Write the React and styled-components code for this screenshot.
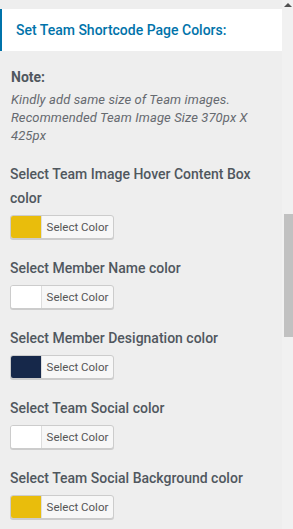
import React from 'react';
import styled, { createGlobalStyle } from 'styled-components';

const GlobalStyle = createGlobalStyle`
  html, body {
    margin: 0;
    padding: 0;
    background: #eeeeee;
  }
  body {
    font-family: Roboto, "Liberation Sans", sans-serif;
    overflow: hidden;
  }
`;

// --- Layout ---
const Frame = styled.div`
  display: flex;
  width: 293px;
  height: 529px;
`;

const Panel = styled.div`
  width: 282px;
  background: #eeeeee;
  padding-top: 9px;
  box-sizing: border-box;
`;

const Header = styled.div`
  height: 42px;
  background: #ffffff;
  border-left: 2px solid #0073aa;
  padding-left: 14px;
  display: flex;
  align-items: center;
  color: #0073aa;
  font-size: 14px;
  font-weight: 500;
`;

const Body = styled.div`
  padding: 16px 10px 0 10px;
`;

const NoteTitle = styled.div`
  font-size: 14px;
  font-weight: 700;
  line-height: 20px;
  color: #50575e;
  padding-left: 1px;
`;

const NoteText = styled.div`
  margin-top: 4px;
  font-size: 13px;
  font-style: italic;
  line-height: 18px;
  letter-spacing: 0.1px;
  color: #666a70;
  padding-left: 1px;
`;

const Field = styled.div`
  margin-top: 17px;
`;

const Label = styled.div`
  font-size: 14px;
  font-weight: 500;
  line-height: 24px;
  color: #50575e;
`;

// --- Color picker button ---
const PickerButton = styled.button`
  margin-top: 5px;
  display: flex;
  align-items: stretch;
  width: 104px;
  height: 24px;
  padding: 0;
  border: 1px solid #cccccc;
  border-radius: 3px;
  background: #f7f7f7;
  box-shadow: 0 1px 0 #cccccc;
  overflow: hidden;
  cursor: pointer;
  box-sizing: border-box;
`;

const Swatch = styled.span`
  width: 30px;
  background: ${p => p.$color};
  border-right: 1px solid #dddddd;
`;

const PickerText = styled.span`
  flex: 1;
  display: flex;
  align-items: center;
  justify-content: center;
  font-family: Roboto, "Liberation Sans", sans-serif;
  font-size: 11.5px;
  color: #555555;
`;

// --- Scrollbar ---
const Scrollbar = styled.div`
  width: 11px;
  background: #f1f1f1;
  display: flex;
  flex-direction: column;
  align-items: flex-end;
`;

const ArrowUp = styled.div`
  width: 0;
  height: 0;
  margin: 3px 1px 0 0;
  border-left: 4px solid transparent;
  border-right: 4px solid transparent;
  border-bottom: 4px solid #505050;
`;

const Thumb = styled.div`
  margin-top: 207px;
  width: 9px;
  height: 123px;
  background: #c1c1c1;
`;

const fields = [
  { label: 'Select Team Image Hover Content Box color', color: '#e9bd0c' },
  { label: 'Select Member Name color', color: '#ffffff' },
  { label: 'Select Member Designation color', color: '#16284a' },
  { label: 'Select Team Social color', color: '#ffffff' },
  { label: 'Select Team Social Background color', color: '#e9bd0c' },
];

function ColorField({ label, color }) {
  return (
    <Field>
      <Label>{label}</Label>
      <PickerButton type="button">
        <Swatch $color={color} />
        <PickerText>Select Color</PickerText>
      </PickerButton>
    </Field>
  );
}

export default function App() {
  return (
    <>
      <GlobalStyle />
      <Frame>
        <Panel>
          <Header>Set Team Shortcode Page Colors:</Header>
          <Body>
            <NoteTitle>Note:</NoteTitle>
            <NoteText>
              Kindly add same size of Team images. Recommended Team Image Size 370px X 425px
            </NoteText>
            {fields.map(f => (
              <ColorField key={f.label} label={f.label} color={f.color} />
            ))}
          </Body>
        </Panel>
        <Scrollbar>
          <ArrowUp />
          <Thumb />
        </Scrollbar>
      </Frame>
    </>
  );
}
